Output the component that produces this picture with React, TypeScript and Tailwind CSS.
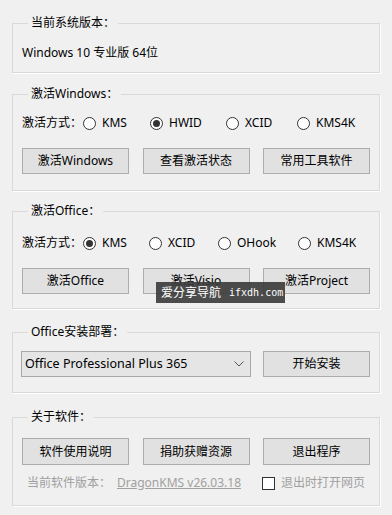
import React from "react";

const font = { fontFamily: '"Noto Sans", "Noto Sans CJK SC", sans-serif' };

function Radio({ label, checked, w }: { label: string; checked?: boolean; w: string }) {
  return (
    <div className={`flex items-center gap-[6px] ${w}`}>
      <span className="flex h-[13px] w-[13px] items-center justify-center rounded-full border border-[#333333] bg-white">
        {checked && <span className="h-[7px] w-[7px] rounded-full bg-[#333333]" />}
      </span>
      <span>{label}</span>
    </div>
  );
}

function Btn({ children, tall }: { children: React.ReactNode; tall?: boolean }) {
  return (
    <div className={`flex ${tall ? "h-[27px]" : "h-[26px]"} w-[107px] items-center justify-center border border-[#adadad] bg-[#e1e1e1] text-black`}>
      {children}
    </div>
  );
}

function Group({ title, children, cls }: { title: string; children: React.ReactNode; cls: string }) {
  return (
    <fieldset className={`ml-[12px] w-[368px] border border-[#d9d9d9] px-[9px] shadow-[1px_1px_0_#ffffff] ${cls}`}>
      <legend className="ml-[6px] h-[16px] px-[3px] leading-[16px]">{title}</legend>
      {children}
    </fieldset>
  );
}

export default function App() {
  return (
    <div className="relative h-[515px] w-[392px] overflow-hidden bg-[#f0f0f0] text-[12px] leading-[16px] text-black" style={font}>
      <div className="h-[15px]" />
      <Group title="当前系统版本：" cls="pt-[14px] pb-[11px]">
        <div className="h-[16px]">Windows 10 专业版 64位</div>
      </Group>

      <Group title="激活Windows：" cls="mt-[13px] pt-[13px] pb-[16px]">
        <div className="flex h-[16px] items-center">
          <span className="w-[61px]">激活方式：</span>
          <Radio label="KMS" w="w-[67px]" />
          <Radio label="HWID" checked w="w-[76px]" />
          <Radio label="XCID" w="w-[71px]" />
          <Radio label="KMS4K" w="" />
        </div>
        <div className="mt-[17px] flex justify-between">
          <Btn>激活Windows</Btn>
          <Btn>查看激活状态</Btn>
          <Btn>常用工具软件</Btn>
        </div>
      </Group>

      <Group title="激活Office：" cls="mt-[12px] pt-[16px] pb-[14px]">
        <div className="flex h-[16px] items-center">
          <span className="w-[61px]">激活方式：</span>
          <Radio label="KMS" checked w="w-[66px]" />
          <Radio label="XCID" w="w-[69px]" />
          <Radio label="OHook" w="w-[80px]" />
          <Radio label="KMS4K" w="" />
        </div>
        <div className="mt-[17px] flex justify-between">
          <Btn>激活Office</Btn>
          <Btn>激活Visio</Btn>
          <Btn>激活Project</Btn>
        </div>
      </Group>

      <Group title="Office安装部署：" cls="mt-[15px] pt-[11px] pb-[15px]">
        <div className="flex items-center justify-between">
          <div className="-ml-[1px] flex h-[26px] w-[230px] items-center justify-between border border-[#a8a8a8] bg-[#e5e5e5] pl-[3px] pr-[6px] text-[12.5px]">
            <span>Office Professional Plus 365</span>
            <svg width="10" height="6" viewBox="0 0 10 6" fill="none">
              <path d="M0.5 0.5 L5 5 L9.5 0.5" stroke="#555" strokeWidth="1" />
            </svg>
          </div>
          <Btn>开始安装</Btn>
        </div>
      </Group>

      <Group title="关于软件：" cls="mt-[16px] pt-[13px] pb-[14px]">
        <div className="flex justify-between">
          <Btn tall>软件使用说明</Btn>
          <Btn tall>捐助获赠资源</Btn>
          <Btn tall>退出程序</Btn>
        </div>
        <div className="mt-[10px] flex h-[16px] items-center text-[#a0a0a0]">
          <span className="ml-[5px] w-[90px]">当前软件版本：</span>
          <span className="underline">DragonKMS v26.03.18</span>
          <span className="ml-[21px] h-[13px] w-[13px] border border-[#333333] bg-white" />
          <span className="ml-[6px]">退出时打开网页</span>
        </div>
      </Group>

      <div className="absolute left-[156px] top-[282px] flex h-[21px] w-[129px] items-center gap-[8px] bg-[#3a3a3a]/90 pl-[5px] text-white">
        <span className="text-[12px]">爱分享导航</span>
        <span className="text-[10px]" style={{ fontFamily: '"DejaVu Sans Mono", monospace' }}>ifxdh.com</span>
      </div>
    </div>
  );
}
